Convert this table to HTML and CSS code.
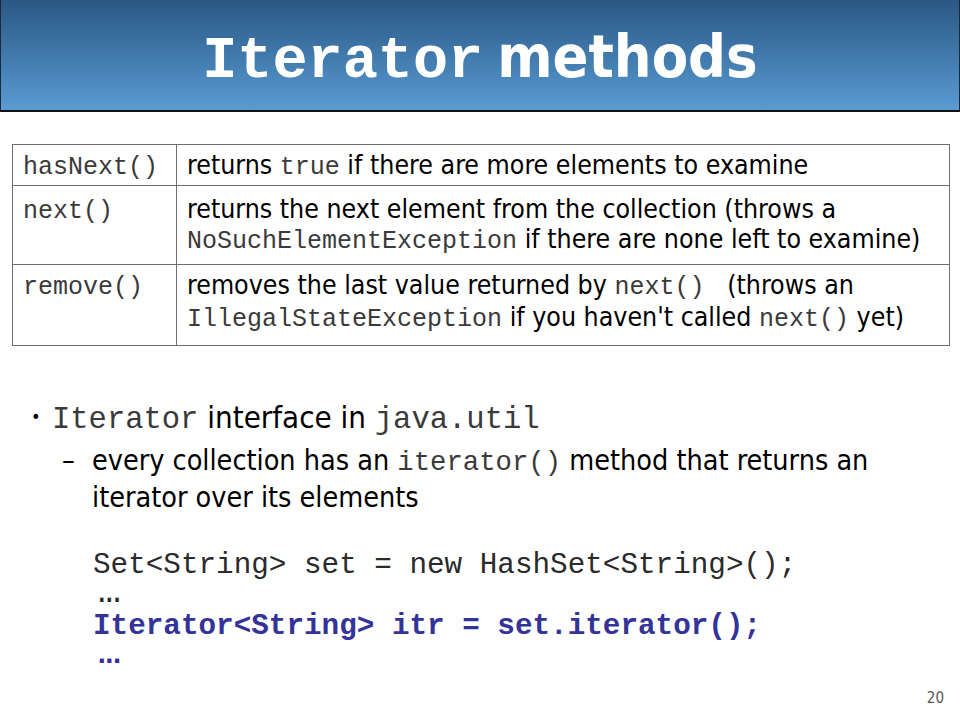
FILE: index.html
```html
<!DOCTYPE html>
<html>
<head>
<meta charset="utf-8">
<link rel="stylesheet" href="styles.css">
</head>
<body>
<div class="slide">
  <header class="banner">
    <h1 class="title"><span class="title-code">Iterator</span> <span class="title-word">methods</span></h1>
  </header>

  <table class="methods">
    <tr class="row-1">
      <td class="name"><code>hasNext()</code></td>
      <td class="desc">returns <code>true</code> if there are more elements to examine</td>
    </tr>
    <tr class="row-2">
      <td class="name"><code>next()</code></td>
      <td class="desc">returns the next element from the collection (throws a<br><code>NoSuchElementException</code> if there are none left to examine)</td>
    </tr>
    <tr class="row-3">
      <td class="name"><code>remove()</code></td>
      <td class="desc">removes the last value returned by <code>next()</code>&nbsp;&nbsp; (throws an<br><code>IllegalStateException</code> if you haven't called <code>next()</code> yet)</td>
    </tr>
  </table>

  <ul class="bullets">
    <li class="lvl1"><span class="dot">•</span><span class="lvl1-text"><code>Iterator</code> interface in <code>java.util</code></span></li>
    <li class="lvl2"><span class="dash">–</span><span class="lvl2-text">every collection has an <code>iterator()</code> method that returns an iterator over its elements</span></li>
  </ul>

  <pre class="code"><span class="plain">Set&lt;String&gt; set = new HashSet&lt;String&gt;();</span>
<span class="plain dots">...</span>
<span class="hl">Iterator&lt;String&gt; itr = set.iterator();</span>
<span class="hl dots">...</span></pre>

  <div class="pagenum">20</div>
</div>
</body>
</html>
```

FILE: styles.css
```css
html, body {
  margin: 0;
  padding: 0;
  background: #ffffff;
}

.slide {
  width: 960px;
  height: 720px;
  position: relative;
  overflow: hidden;
  font-family: "DejaVu Sans Condensed", "DejaVu Sans", sans-serif;
  color: #000;
}

.banner {
  height: 110px;
  border-bottom: 2px solid #111;
  border-left: 1px solid #1a2a3a;
  border-right: 1px solid #1a2a3a;
  background: linear-gradient(to bottom, #2b5884 0%, #3e76a8 45%, #5a9bd2 100%);
  display: flex;
  justify-content: center;
  align-items: flex-start;
}

.title {
  margin: 0;
  padding-top: 22px;
  color: #fff;
  font-weight: bold;
  line-height: 70px;
  white-space: nowrap;
}

.title-code {
  font-family: "Liberation Mono", monospace;
  font-size: 58.5px;
  font-weight: bold;
}

.title-word {
  font-family: "DejaVu Sans Condensed", "DejaVu Sans", sans-serif;
  font-size: 59px;
  font-weight: bold;
  margin-left: 4px;
}

.methods {
  margin: 32px 0 0 12px;
  width: 938px;
  border-collapse: collapse;
  font-size: 26.5px;
}

.methods td {
  border: 1.5px solid #6e6e6e;
  vertical-align: top;
  padding: 0 6px 0 10px;
}

.methods td.name {
  width: 164px;
  box-sizing: border-box;
}

.methods code {
  font-family: "Liberation Mono", monospace;
  font-size: 25px;
  line-height: 16px;
  color: #3a3a3a;
}

.row-1 td { line-height: 40px; padding-top: 0; padding-bottom: 0; }
.row-2 td { line-height: 30px; padding-top: 8px; padding-bottom: 10px; }
.row-3 td { line-height: 32px; padding-top: 4px; padding-bottom: 12px; }

.bullets {
  list-style: none;
  margin: 51px 0 0 0;
  padding: 0;
}

.lvl1 {
  display: flex;
  padding-left: 31px;
  font-size: 31px;
  line-height: 40px;
}

.dot {
  width: 21px;
  font-size: 18px;
  flex: none;
}

.lvl1 code {
  font-family: "Liberation Mono", monospace;
  font-size: 30.5px;
  line-height: 20px;
  color: #3a3a3a;
}

.lvl2 {
  display: flex;
  padding-left: 62px;
  margin-top: 5px;
  font-size: 28.5px;
  line-height: 37px;
}

.dash {
  width: 30px;
  flex: none;
}

.lvl2-text {
  width: 820px;
}

.lvl2 code {
  font-family: "Liberation Mono", monospace;
  font-size: 27.3px;
  line-height: 20px;
  color: #3a3a3a;
}

.code {
  margin: 35px 0 0 93px;
  font-family: "Liberation Mono", monospace;
  font-size: 29.3px;
  line-height: 30.5px;
  color: #2a2a2a;
}

.code .dots {
  display: inline-block;
  letter-spacing: -10px;
  transform: translateY(-2px);
}

.code .hl {
  color: #333399;
  font-weight: bold;
}

.pagenum {
  position: absolute;
  right: 16px;
  bottom: 13px;
  font-size: 15px;
  color: #555;
}
```
